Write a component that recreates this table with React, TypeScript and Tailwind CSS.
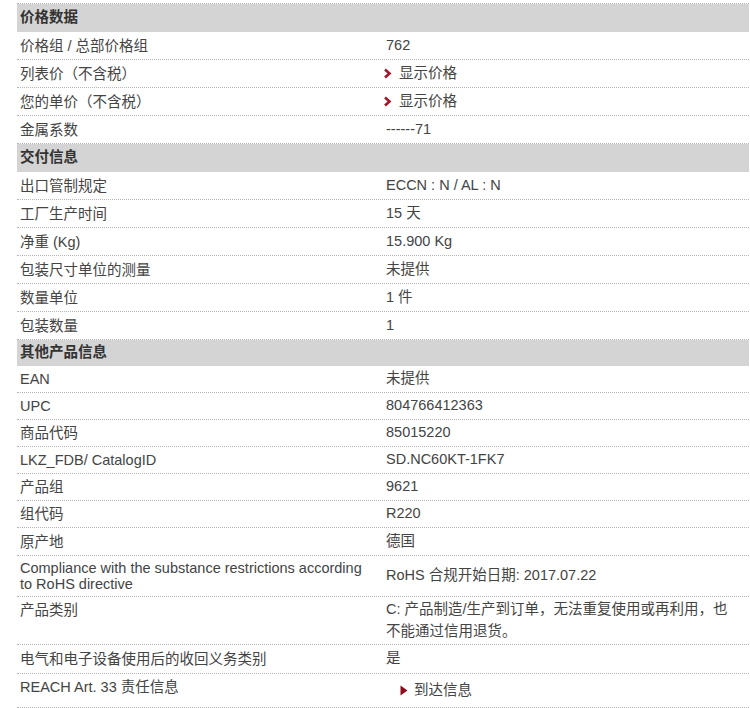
import React from 'react';

type Row =
  | { kind: 'head'; label: string; h: string }
  | { kind: 'row'; label: React.ReactNode; value: React.ReactNode; h: string; align?: 'center' | 'start'; valueClass?: string };

const Chevron = () => (
  <svg width="9" height="11" viewBox="0 0 9 11" className="shrink-0">
    <path d="M2 1.5 L6.5 5.5 L2 9.5" fill="none" stroke="#a3162b" strokeWidth="2.6" />
  </svg>
);

const Triangle = () => (
  <svg width="8" height="11" viewBox="0 0 8 11" className="shrink-0">
    <path d="M0.5 0.5 L7.5 5.5 L0.5 10.5 Z" fill="#8e0d1d" />
  </svg>
);

const ShowPrice = () => (
  <span className="flex items-center gap-[7px] -ml-[3px]">
    <Chevron />
    <span>显示价格</span>
  </span>
);

const rows: Row[] = [
  { kind: 'head', label: '价格数据', h: 'h-[28px]' },
  { kind: 'row', label: '价格组 / 总部价格组', value: '762', h: 'h-[28px]' },
  { kind: 'row', label: '列表价（不含税）', value: <ShowPrice />, h: 'h-[28px]' },
  { kind: 'row', label: '您的单价（不含税）', value: <ShowPrice />, h: 'h-[28px]' },
  { kind: 'row', label: '金属系数', value: '------71', h: 'h-[28px]' },
  { kind: 'head', label: '交付信息', h: 'h-[28px]' },
  { kind: 'row', label: '出口管制规定', value: 'ECCN : N / AL : N', h: 'h-[28px]' },
  { kind: 'row', label: '工厂生产时间', value: '15 天', h: 'h-[28px]' },
  { kind: 'row', label: '净重 (Kg)', value: '15.900 Kg', h: 'h-[28px]' },
  { kind: 'row', label: '包装尺寸单位的测量', value: '未提供', h: 'h-[28px]' },
  { kind: 'row', label: '数量单位', value: '1 件', h: 'h-[28px]' },
  { kind: 'row', label: '包装数量', value: '1', h: 'h-[28px]' },
  { kind: 'head', label: '其他产品信息', h: 'h-[26px]' },
  { kind: 'row', label: 'EAN', value: '未提供', h: 'h-[27px]' },
  { kind: 'row', label: 'UPC', value: '804766412363', h: 'h-[27px]' },
  { kind: 'row', label: '商品代码', value: '85015220', h: 'h-[27px]' },
  { kind: 'row', label: 'LKZ_FDB/ CatalogID', value: 'SD.NC60KT-1FK7', h: 'h-[27px]' },
  { kind: 'row', label: '产品组', value: '9621', h: 'h-[27px]' },
  { kind: 'row', label: '组代码', value: 'R220', h: 'h-[27px]' },
  { kind: 'row', label: '原产地', value: '德国', h: 'h-[28px]' },
  {
    kind: 'row',
    label: 'Compliance with the substance restrictions according to RoHS directive',
    value: 'RoHS 合规开始日期: 2017.07.22',
    h: 'h-[41px]',
  },
  {
    kind: 'row',
    label: '产品类别',
    value: 'C: 产品制造/生产到订单，无法重复使用或再利用，也不能通过信用退货。',
    h: 'h-[48px]',
    align: 'start',
    valueClass: 'leading-[22px] pt-[1px]',
  },
  { kind: 'row', label: '电气和电子设备使用后的收回义务类别', value: '是', h: 'h-[29px]' },
  {
    kind: 'row',
    label: 'REACH Art. 33 责任信息',
    value: (
      <span className="flex items-center gap-[6px] pl-[14px] pt-[5px]">
        <Triangle />
        <span>到达信息</span>
      </span>
    ),
    h: 'h-[34px]',
    align: 'start',
  },
];

const App: React.FC = () => {
  return (
    <div
      className="w-[750px] h-[708px] overflow-hidden bg-white pt-[3px] pl-[17px] pr-[1px] text-[14.5px] text-[#444]"
      style={{ fontFamily: '"Liberation Sans", Arial, "Noto Sans CJK SC", sans-serif' }}
    >
      <div className="border-t border-dotted border-[#b5b5b5]">
        {rows.map((r, i) =>
          r.kind === 'head' ? (
            <div key={i} className={`${r.h} flex items-center bg-[#d4d4d4] pl-[3px] font-bold text-[#333]`}>
              {r.label}
            </div>
          ) : (
            <div
              key={i}
              className={`${r.h} flex border-b border-dotted border-[#b5b5b5] ${
                r.align === 'start' ? 'items-start' : 'items-center'
              }`}
            >
              <div
                className={`w-[366px] shrink-0 pl-[3px] pr-[6px] leading-[16px] ${
                  r.align === 'start' ? 'pt-[5px]' : ''
                }`}
              >
                {r.label}
              </div>
              <div className={`flex-1 pl-[3px] pr-[10px] ${r.align === 'start' ? 'pt-[1px]' : ''} ${r.valueClass ?? ''}`}>
                {r.value}
              </div>
            </div>
          )
        )}
      </div>
    </div>
  );
};

export default App;
